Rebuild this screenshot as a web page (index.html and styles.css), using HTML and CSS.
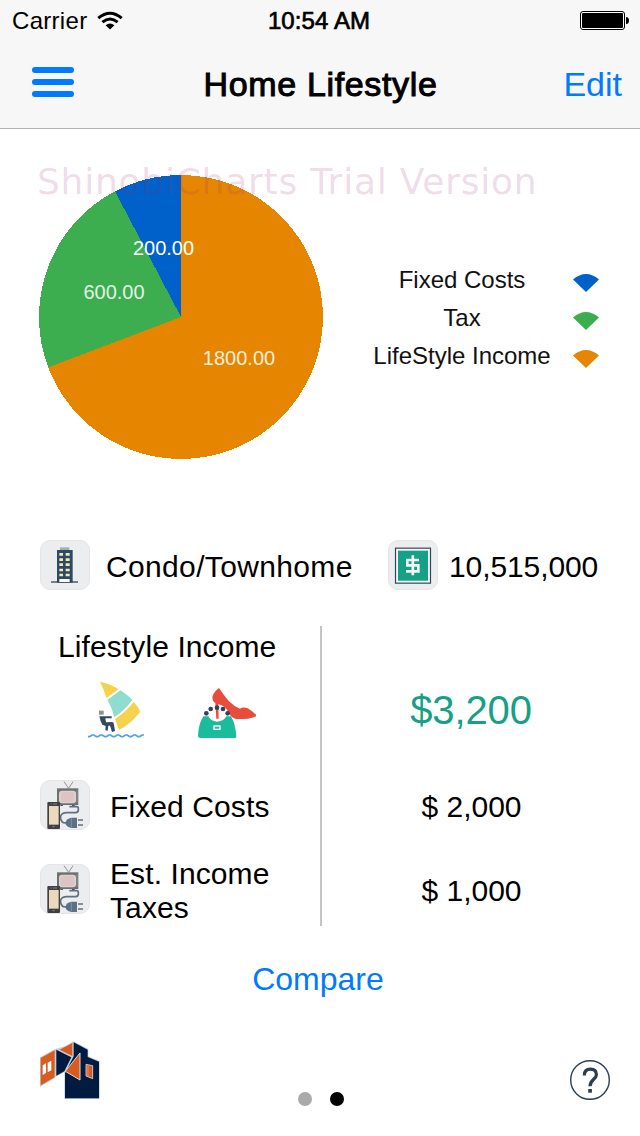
FILE: index.html
```html
<!DOCTYPE html>
<html lang="en">
<head>
<meta charset="utf-8">
<title>Home Lifestyle</title>
<link rel="stylesheet" href="styles.css">
</head>
<body>
<svg class="defs" width="0" height="0">
  <symbol id="devices" viewBox="30 30 150 150">
    <path d="M102 35l14 20 13-20" fill="none" stroke="#929292" stroke-width="3"/>
    <path d="M118 110h22q5 0 5 6v4q0 8-9 8h-26q-14 0-18 10-2 14 8 20l8 1" fill="none" stroke="#5b7186" stroke-width="5"/>
    <path d="M91 102h8v6h-8zM126 102h8v6h-8z" fill="#555"/>
    <rect x="81" y="55" width="64" height="50" fill="#6f6f6f"/>
    <rect x="87" y="62" width="51" height="38" rx="9" fill="#d5d5d3"/>
    <rect x="92" y="66" width="41" height="30" rx="8" fill="#dfc3c4"/>
    <path d="M141 61v37" stroke="#aaa" stroke-width="2"/>
    <rect x="52" y="96" width="38" height="81" rx="3" fill="#403f41"/>
    <rect x="57" y="108" width="29" height="56" fill="#ead9ba"/>
    <path d="M61 102h4m4 0h12M67 170h7" stroke="#aaa" stroke-width="2"/>
    <path d="M124 143h17v31h-17q-16-3-18-15 2-13 18-16z" fill="#5b7186"/>
    <path d="M124 145v27" stroke="#8192a2" stroke-width="3"/>
    <path d="M144 150h15M144 165h15" stroke="#5b7186" stroke-width="4"/>
  </symbol>
</svg>

<header class="header">
  <div class="status">
    <div class="carrier"><span>Carrier</span>
      <svg width="26" height="20" viewBox="0 0 26 20"><g fill="none" stroke="#000" stroke-width="3"><path d="M1.3 7.2Q13-2.8 24.700 7.200"/><path d="M5.400 11.200Q13 4.700 20.600 11.200"/></g><path d="M8.600 14.200Q13 10.700 17.400 14.200L13 18.600z"/></svg>
    </div>
    <div class="time">10:54 AM</div>
    <svg class="battery" width="50" height="20" viewBox="0 0 50 20"><rect x=".5" y=".5" width="44" height="18" rx="2.500" fill="#fff" stroke="#000"/><rect x="2" y="2" width="41" height="15" rx="1"/><path d="M46 6q3 0 3 3.500t-3 3.500z"/></svg>
  </div>
  <nav class="nav">
    <div class="menu"><i></i><i></i><i></i></div>
    <h1 class="title">Home Lifestyle</h1>
    <a class="edit">Edit</a>
  </nav>
</header>

<section class="chart">
  <svg class="pie" width="284" height="284" viewBox="0 0 284 284">
    <g shape-rendering="crispEdges">
      <circle cx="142" cy="142" r="142" fill="#e68600"/>
      <path d="M142 142L9.200 192.400A142 142 0 0 1 76 16.300z" fill="#3cae4f"/>
      <path d="M142 142L76 16.300A142 142 0 0 1 142 0z" fill="#0061ca"/>
    </g>
    <g class="values" text-anchor="middle">
      <text x="124.500" y="80">200.00</text>
      <text x="75" y="124" opacity=".85">600.00</text>
      <text x="200" y="190" opacity=".85">1800.00</text>
    </g>
  </svg>
  <div class="legend">
    <span>Fixed Costs</span><svg class="key blue" viewBox="0 0 26 18"><path d="M0 5.500Q13-5.500 26 5.500L13 18z"/></svg>
    <span>Tax</span><svg class="key green" viewBox="0 0 26 18"><path d="M0 5.500Q13-5.500 26 5.500L13 18z"/></svg>
    <span>LifeStyle Income</span><svg class="key orange" viewBox="0 0 26 18"><path d="M0 5.500Q13-5.500 26 5.500L13 18z"/></svg>
  </div>
  <div class="watermark">ShinobiCharts Trial Version</div>
</section>

<section class="property">
  <div class="tile">
    <svg width="50" height="50" viewBox="30 30 150 150">
      <path d="M90 52h28v9H90z" fill="#9db3b2"/>
      <path d="M81 60h47v98H81z" fill="#2c4a63"/>
      <path d="M63 156h81" stroke="#34495e" stroke-width="4"/>
      <path d="M88 69h11v8H88zM107 69h12v8h-12zM88 85h11v8H88zM107 85h12v8h-12zM88 100h11v8H88zM107 100h12v8h-12zM88 116h11v8H88zM107 116h12v8h-12zM88 131h11v8H88zM107 131h12v8h-12z" fill="#f7e6b8"/>
      <path d="M88 147h31v9H88z" fill="#fff"/>
    </svg>
  </div>
  <span class="kind">Condo/Townhome</span>
  <div class="tile">
    <svg width="50" height="50" viewBox="24 30 150 150">
      <rect x="46.500" y="54.500" width="105" height="105" fill="#f4f6f6" stroke="#34435c" stroke-width="3.500"/>
      <rect x="54" y="62" width="90" height="90" fill="#16a085"/>
      <path d="M117 90H82v16h33v18H78M98.500 76v60" fill="none" stroke="#f2f7f6" stroke-width="8"/>
    </svg>
  </div>
  <span class="price">10,515,000</span>
</section>

<section class="budget">
  <div class="left">
    <h2 class="heading">Lifestyle Income</h2>
    <div class="activities">
      <svg width="58" height="58" viewBox="24 18 174 174">
        <path d="M60 20Q92 27 116 43L79 69Q72 43 60 20z" fill="#f4d24b"/>
        <path d="M121 46Q141 58 157 75Q133 108 102 127Q98 101 82 75z" fill="#8eddcf"/>
        <path d="M161 81Q174 94 181 110Q153 146 117 165L105 132Q137 112 161 81z" fill="#f4d24b"/>
        <path d="M57 107h14v12H57z" fill="#829486"/>
        <path d="M58 124h37v6H76l2 12 19-1q4 1 5 8l3 19-9 3-6-19h-5l-2 15-7-1 1-13-10-4q-6-9-9-25z" fill="#34495e"/>
        <path d="M24 185h5l7-5h6l7 5h5l7-5h6l7 5h5l7-5h6l7 5h5l7-5h6l7 5h5l7-5h6l7 5h5l7-5h6l7 5h5l7-5h6" fill="none" stroke="#4ba3df" stroke-width="5"/>
      </svg>
      <svg width="58" height="58" viewBox="24 18 174 174">
        <path d="M40 124H55Q61 138 81 140Q103 138 109 124H123Q137 148 139 185Q139 189 133 189H31Q24 189 24 183Q25 149 40 124z" fill="#1abc9c"/>
        <path d="M67 65Q73 48 87 39Q101 60 116 78Q132 94 150 101Q159 94 173 100Q188 109 198 119V124Q186 131 163 132H139Q124 130 115 111Q104 91 85 88L86 131H79L76 83Q68 81 67 65z" fill="#e74c3c"/>
        <path d="M84 91Q101 93 113 115L106 118Q102 108 88 102z" fill="#fff"/>
        <g fill="#34435a"><circle cx="49" cy="115" r="7"/><circle cx="62" cy="102" r="7"/><circle cx="81" cy="98" r="7"/><circle cx="99" cy="102" r="7"/><circle cx="113" cy="115" r="7"/></g>
        <rect x="72" y="153" width="18" height="10" fill="none" stroke="#fff" stroke-width="4"/>
      </svg>
    </div>
    <div class="item"><div class="tile"><svg width="50" height="50"><use href="#devices"/></svg></div><span>Fixed Costs</span></div>
    <div class="item taxes"><div class="tile"><svg width="50" height="50"><use href="#devices"/></svg></div><span>Est. Income<br>Taxes</span></div>
  </div>
  <div class="right">
    <div class="income">$3,200</div>
    <div class="amount">$ 2,000</div>
    <div class="amount last">$ 1,000</div>
  </div>
</section>

<a class="compare">Compare</a>

<footer class="footer">
  <svg class="logo" width="60" height="59" viewBox="30 33 180 177">
    <path d="M30 82L76 57L108 47L130 34L175 57V79L209 93V207H103V127L76 141L74 144L30 171z" fill="#c5ced8"/>
    <path d="M32 84L74 61V142L32 166z" fill="#d85c20"/>
    <path d="M38 106l10-6v29l-10 6zM53 98l11-6v29l-11 6z" fill="#fff"/>
    <path d="M79 59L124 82L103 124L79 137z" fill="#001b40"/>
    <path d="M89 59L127 39V78z" fill="#d85c20"/>
    <path d="M131 37L173 59V81L207 95V205H105V130L131 79z" fill="#001b40"/>
    <path d="M106 124L150 69V150z" fill="#d85c20" stroke="#d5dbe1" stroke-width="3"/>
    <path d="M168 103l20 4v39l-20-8z" fill="#d85c20" stroke="#d5dbe1" stroke-width="2.500"/>
    <path d="M174 107v32" stroke="#efad8d" stroke-width="2"/>
  </svg>
  <div class="dots"><i></i><i class="on"></i></div>
  <div class="help"><svg width="40" height="40" viewBox="0 0 40 40"><circle cx="20" cy="20" r="19.300" fill="none" stroke="#2c3e50" stroke-width="1.400"/><path d="M14.300 15.500Q14.300 9.200 20.400 9.200Q26.400 9.200 26.400 14.700C26.400 19.200 20 19.700 20 26.300" fill="none" stroke="#2c3e50" stroke-width="3.200"/><path d="M18.200 29h3.700v3.700h-3.700z" fill="#2c3e50"/></svg></div>
</footer>
</body>
</html>
```

FILE: styles.css
```css
* { box-sizing: border-box; }
body {
  margin: 0;
  width: 640px;
  height: 1136px;
  display: flex;
  flex-direction: column;
  background: #fff;
  color: #000;
  font: 30px/34px "Liberation Sans", Arial, sans-serif;
  overflow: hidden;
}
svg { display: block; flex: none; }
.defs { position: absolute; }
h1, h2 { margin: 0; font-weight: normal; }

.header { height: 129px; background: #f7f7f7; border-bottom: 1px solid #b2b2b2; }
.status {
  display: grid;
  grid-template-columns: 1fr auto 1fr;
  align-items: center;
  height: 40px;
  padding: 2px 10px 0 12px;
  font-size: 24px;
  line-height: 38px;
}
.carrier { display: flex; align-items: center; gap: 10px; letter-spacing: 0.3px; }
.time { margin-right: 4px; letter-spacing: 0.1px; -webkit-text-stroke: 0.7px #000; }
.battery { justify-self: end; }
.nav {
  display: grid;
  grid-template-columns: 1fr auto 1fr;
  align-items: center;
  height: 88px;
  padding: 0 18px 0 32px;
  font-size: 34px;
}
.menu { display: flex; flex-direction: column; gap: 6.5px; width: 42px; margin-bottom: 4px; }
.menu i { height: 5.5px; border-radius: 3px; background: #007aff; }
.title { margin-right: 13px; font-size: 34px; letter-spacing: 0.65px; -webkit-text-stroke: 1px #000; }
.edit { justify-self: end; color: #007aff; }

.chart { position: relative; display: flex; height: 411px; padding: 46px 0 0 39px; }
.values { font-size: 20px; fill: #fff; }
.legend {
  display: grid;
  grid-template-columns: 200px 26px;
  grid-auto-rows: 38px;
  column-gap: 11px;
  align-content: start;
  align-items: center;
  margin: 86px 0 0 39px;
  font-size: 24px;
  text-align: center;
  color: #111;
}
.key { width: 26px; height: 18px; margin-top: 6px; }
.blue { fill: #0061ca; }
.green { fill: #3cae4f; }
.orange { fill: #e68600; }
.watermark {
  position: absolute;
  left: 37px;
  top: 31px;
  font: 36px/44px "DejaVu Sans", sans-serif;
  letter-spacing: 0.76px;
  white-space: nowrap;
  color: rgba(155, 45, 115, 0.18);
}

.tile { width: 50px; height: 50px; border: 1px solid #e3e5e6; border-radius: 10px; background: #ecedef; flex: none; }
.tile svg { margin: -1px; }
.property { display: flex; align-items: center; height: 50px; padding-left: 40px; }
.kind { width: 282px; padding: 4px 0 0 16px; margin-right: 16px; letter-spacing: 0.35px; }
.price { padding: 4px 0 0 11px; letter-spacing: -0.1px; }

.budget { display: flex; height: 300px; margin-top: 36px; }
.left { width: 322px; border-right: 2px solid #c4c4c4; }
.heading { height: 55px; padding: 4px 0 0 58px; font-size: 30px; letter-spacing: 0.1px; }
.activities { display: flex; gap: 52px; padding-left: 88px; }
.item { display: flex; align-items: center; gap: 20px; height: 50px; margin: 41px 0 0 40px; }
.item span { padding-top: 4px; letter-spacing: 0.1px; }
.taxes { margin-top: 34px; }
.right { flex: 1; padding: 59px 19px 0 0; text-align: center; }
.income { height: 105px; padding-right: 1px; font-size: 40px; line-height: 50px; letter-spacing: -0.1px; color: #16a085; }
.amount { height: 84px; }

.compare { margin-top: 35px; padding-right: 4px; text-align: center; font-size: 32px; line-height: 36px; color: #007aff; }
.footer {
  display: grid;
  grid-template-columns: 1fr auto 1fr;
  align-items: start;
  height: 95px;
  margin-top: 44px;
  padding: 0 30px 0 40px;
}
.dots { display: flex; gap: 18px; margin: 51px 8px 0 0; }
.dots i { width: 14px; height: 14px; border-radius: 50%; background: #aaa; }
.dots .on { background: #000; }
.help { justify-self: end; margin-top: 19px; }
```
